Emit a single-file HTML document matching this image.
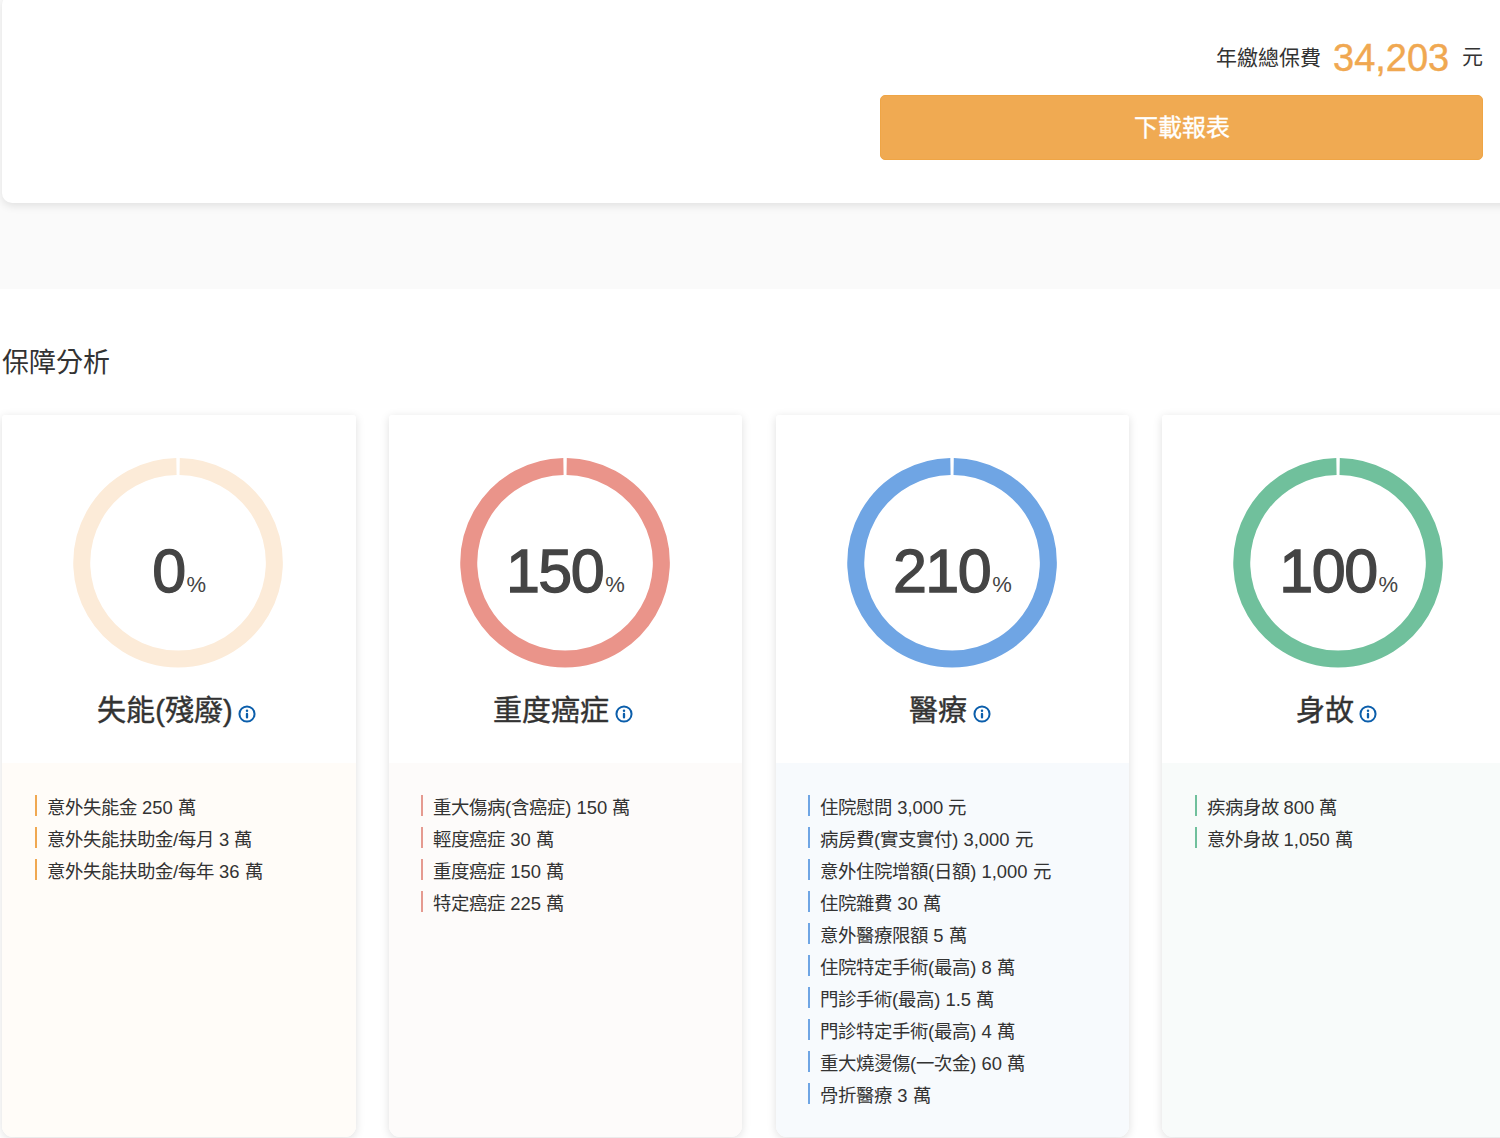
<!DOCTYPE html>
<html lang="zh-TW"><head><meta charset="utf-8"><title>保障分析</title>
<style>
html,body{margin:0;padding:0;}
body{width:1500px;height:1138px;overflow:hidden;position:relative;background:#fff;font-family:"Liberation Sans",sans-serif;color:#333;}
.graybg{position:absolute;left:0;top:0;width:1500px;height:289px;background:#fafafa;}
.topcard{position:absolute;left:2px;top:-5px;width:1520px;height:208px;background:#fff;border-radius:10px;box-shadow:0 3px 8px rgba(0,0,0,0.10);}
.total{position:absolute;right:17px;top:36px;white-space:nowrap;}
.total .lbl{position:absolute;font-size:21.5px;color:#333;}
.total .amt{position:absolute;font-size:38px;color:#f0a851;}
.total .yuan{position:absolute;font-size:21px;color:#333;}
.btn{position:absolute;left:880px;top:95px;width:603px;height:65px;box-sizing:border-box;background:#f0aa52;border:1px solid #efa545;border-radius:5px;color:#fff;font-size:24px;font-weight:500;text-align:center;line-height:63px;-webkit-text-stroke:0.35px #fff;}
h2{position:absolute;left:2px;top:343px;margin:0;font-size:27px;font-weight:400;color:#333;line-height:40px;white-space:nowrap;}
.card{position:absolute;top:414.5px;width:353.5px;height:722px;background:#fff;border-radius:3px 3px 11px 11px;box-shadow:0 2px 10px rgba(0,0,0,0.13);overflow:hidden;}
.card .top{position:relative;height:348.5px;}
.ring{position:absolute;left:0;top:0;}
.num{position:absolute;left:0;width:353.5px;top:121px;text-align:center;white-space:nowrap;color:#444;}
.num .n{font-size:61px;line-height:70px;letter-spacing:-1.5px;-webkit-text-stroke:1.3px #444;}
.num .p{font-size:22px;margin-left:2px;}
.title{position:absolute;left:-2.5px;width:353.5px;top:276.7px;text-align:center;white-space:nowrap;font-size:29px;font-weight:400;color:#333;line-height:40px;-webkit-text-stroke:0.4px #333;}
.title .info{display:inline-block;vertical-align:middle;margin-left:5.4px;position:relative;top:0.4px;-webkit-text-stroke:0;}
.bot{position:absolute;left:0;top:348.5px;width:353.5px;height:374px;}
.bot ul{list-style:none;margin:0;padding:0;position:absolute;left:44.5px;top:29px;}
.bot li{position:relative;font-size:18.4px;line-height:32px;height:32px;white-space:nowrap;color:#333;}
.bot li i{position:absolute;left:-12px;top:3px;width:2px;height:21px;}
</style></head><body>
<div class="graybg"></div>
<div class="topcard"></div>
<div class="lbl" style="position:absolute;left:1216px;top:42px;font-size:21px;line-height:32px;color:#333;white-space:nowrap">年繳總保費</div>
<div class="amt" style="position:absolute;left:1333px;top:32.5px;font-size:38px;line-height:50px;color:#f0a851;white-space:nowrap;-webkit-text-stroke:0.45px #f0a851">34,203</div>
<div class="yuan" style="position:absolute;left:1462px;top:41px;font-size:21px;line-height:32px;color:#333;white-space:nowrap">元</div>
<div class="btn">下載報表</div>
<h2>保障分析</h2>
<div class="card" style="left:2.4px">
  <div class="top"><svg class="ring" width="353.5" height="300" viewBox="0 0 353.5 300"><path d="M177.650,51.413 A96.3,96.3 0 1 1 174.450,51.413" fill="none" stroke="#fcebd8" stroke-width="17"/></svg>
    <div class="num"><span class="n">0</span><span class="p">%</span></div>
    <div class="title"><span>失能(殘廢)</span><svg class="info" width="18" height="18" viewBox="0 0 18 18"><circle cx="9" cy="9" r="7.55" fill="none" stroke="#0b5eab" stroke-width="2"/><circle cx="9" cy="5.75" r="1.25" fill="#0b5eab"/><line x1="9" y1="8.9" x2="9" y2="12.4" stroke="#0b5eab" stroke-width="2.3" stroke-linecap="round"/></svg></div>
  </div>
  <div class="bot" style="background:#fffcf8"><ul>
<li><i style="background:#f0a851"></i>意外失能金 250 萬</li>
<li><i style="background:#f0a851"></i>意外失能扶助金/每月 3 萬</li>
<li><i style="background:#f0a851"></i>意外失能扶助金/每年 36 萬</li>
  </ul></div>
</div><div class="card" style="left:388.6px">
  <div class="top"><svg class="ring" width="353.5" height="300" viewBox="0 0 353.5 300"><path d="M177.650,51.413 A96.3,96.3 0 1 1 174.450,51.413" fill="none" stroke="#ea948a" stroke-width="17"/></svg>
    <div class="num"><span class="n">150</span><span class="p">%</span></div>
    <div class="title"><span>重度癌症</span><svg class="info" width="18" height="18" viewBox="0 0 18 18"><circle cx="9" cy="9" r="7.55" fill="none" stroke="#0b5eab" stroke-width="2"/><circle cx="9" cy="5.75" r="1.25" fill="#0b5eab"/><line x1="9" y1="8.9" x2="9" y2="12.4" stroke="#0b5eab" stroke-width="2.3" stroke-linecap="round"/></svg></div>
  </div>
  <div class="bot" style="background:#fdfbfa"><ul>
<li><i style="background:#e59a90"></i>重大傷病(含癌症) 150 萬</li>
<li><i style="background:#e59a90"></i>輕度癌症 30 萬</li>
<li><i style="background:#e59a90"></i>重度癌症 150 萬</li>
<li><i style="background:#e59a90"></i>特定癌症 225 萬</li>
  </ul></div>
</div><div class="card" style="left:775.6px">
  <div class="top"><svg class="ring" width="353.5" height="300" viewBox="0 0 353.5 300"><path d="M177.650,51.413 A96.3,96.3 0 1 1 174.450,51.413" fill="none" stroke="#6fa5e4" stroke-width="17"/></svg>
    <div class="num"><span class="n">210</span><span class="p">%</span></div>
    <div class="title"><span>醫療</span><svg class="info" width="18" height="18" viewBox="0 0 18 18"><circle cx="9" cy="9" r="7.55" fill="none" stroke="#0b5eab" stroke-width="2"/><circle cx="9" cy="5.75" r="1.25" fill="#0b5eab"/><line x1="9" y1="8.9" x2="9" y2="12.4" stroke="#0b5eab" stroke-width="2.3" stroke-linecap="round"/></svg></div>
  </div>
  <div class="bot" style="background:#f7fafd"><ul>
<li><i style="background:#6fa5e4"></i>住院慰問 3,000 元</li>
<li><i style="background:#6fa5e4"></i>病房費(實支實付) 3,000 元</li>
<li><i style="background:#6fa5e4"></i>意外住院增額(日額) 1,000 元</li>
<li><i style="background:#6fa5e4"></i>住院雜費 30 萬</li>
<li><i style="background:#6fa5e4"></i>意外醫療限額 5 萬</li>
<li><i style="background:#6fa5e4"></i>住院特定手術(最高) 8 萬</li>
<li><i style="background:#6fa5e4"></i>門診手術(最高) 1.5 萬</li>
<li><i style="background:#6fa5e4"></i>門診特定手術(最高) 4 萬</li>
<li><i style="background:#6fa5e4"></i>重大燒燙傷(一次金) 60 萬</li>
<li><i style="background:#6fa5e4"></i>骨折醫療 3 萬</li>
  </ul></div>
</div><div class="card" style="left:1162px">
  <div class="top"><svg class="ring" width="353.5" height="300" viewBox="0 0 353.5 300"><path d="M177.650,51.413 A96.3,96.3 0 1 1 174.450,51.413" fill="none" stroke="#70c09c" stroke-width="17"/></svg>
    <div class="num"><span class="n">100</span><span class="p">%</span></div>
    <div class="title"><span>身故</span><svg class="info" width="18" height="18" viewBox="0 0 18 18"><circle cx="9" cy="9" r="7.55" fill="none" stroke="#0b5eab" stroke-width="2"/><circle cx="9" cy="5.75" r="1.25" fill="#0b5eab"/><line x1="9" y1="8.9" x2="9" y2="12.4" stroke="#0b5eab" stroke-width="2.3" stroke-linecap="round"/></svg></div>
  </div>
  <div class="bot" style="background:#f8fbfa"><ul>
<li><i style="background:#70c09c"></i>疾病身故 800 萬</li>
<li><i style="background:#70c09c"></i>意外身故 1,050 萬</li>
  </ul></div>
</div>
</body></html>
